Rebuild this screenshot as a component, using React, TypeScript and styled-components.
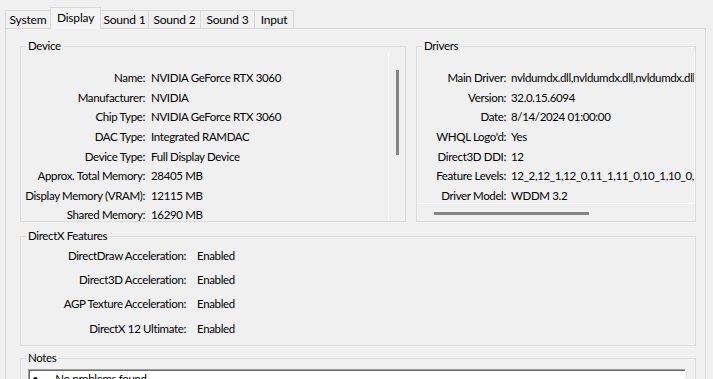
import styled, { createGlobalStyle } from "styled-components";

const GlobalStyle = createGlobalStyle`
  html, body {
    margin: 0;
    padding: 0;
    background: #f0f0f0;
  }
  body {
    font-family: Lato, "Liberation Sans", sans-serif;
    font-size: 11.5px;
    letter-spacing: -0.35px;
    color: #000;
    overflow: hidden;
  }
`;

const Window = styled.div`
  width: 713px;
  height: 379px;
  overflow: hidden;
  box-sizing: border-box;
  padding: 7px 0 0 5px;
`;

const TabBar = styled.div`
  display: flex;
  align-items: flex-end;
  height: 22px;
  margin-bottom: -1px;
  position: relative;
  z-index: 1;
`;

const Tab = styled.div<{ $active?: boolean; $w: number }>`
  width: ${(p) => p.$w}px;
  height: ${(p) => (p.$active ? 22 : 19)}px;
  box-sizing: border-box;
  margin-left: -1px;
  border: 1px solid #d9d9d9;
  border-bottom: ${(p) => (p.$active ? "none" : "1px solid #d9d9d9")};
  background: ${(p) => (p.$active ? "#f4f4f4" : "#f0f0f0")};
  display: flex;
  align-items: center;
  justify-content: center;
  font-size: 12px;
  letter-spacing: -0.2px;
  padding-bottom: ${(p) => (p.$active ? 3 : 1)}px;
  &:first-child {
    margin-left: 0;
  }
`;

const Panel = styled.div`
  width: 701px;
  height: 400px;
  box-sizing: border-box;
  border: 1px solid #d9d9d9;
  background: #f0f0f0;
  padding: 10px 9px 0 14px;
`;

const TopRow = styled.div`
  display: flex;
  gap: 10px;
`;

const Group = styled.fieldset<{ $w?: number; $h: number; $top?: number }>`
  margin: ${(p) => p.$top ?? 0}px 0 0 0;
  padding: 0;
  min-width: 0;
  width: ${(p) => (p.$w ? `${p.$w}px` : "auto")};
  height: ${(p) => p.$h}px;
  box-sizing: border-box;
  border: 1px solid #dcdcdc;
  display: flex;
  flex-direction: column;
`;

const Legend = styled.legend`
  margin-left: 5px;
  padding: 0 2px;
  line-height: 14px;
`;

const ScrollView = styled.div`
  flex: 1;
  display: flex;
  min-height: 0;
`;

const ScrollViewV = styled.div`
  flex: 1;
  display: flex;
  flex-direction: column;
  min-height: 0;
  min-width: 0;
`;

const List = styled.div<{ $right?: boolean; $bottom?: boolean }>`
  flex: 1;
  min-width: 0;
  min-height: 0;
  overflow: hidden;
  padding-top: 15px;
  border-right: ${(p) => (p.$right ? "1px solid #fafafa" : "none")};
  border-bottom: ${(p) => (p.$bottom ? "1px solid #fafafa" : "none")};
`;

const Row = styled.div<{ $label: number; $gap: number; $h: number }>`
  display: grid;
  grid-template-columns: ${(p) => p.$label}px auto;
  column-gap: ${(p) => p.$gap}px;
  height: ${(p) => p.$h}px;
  align-items: center;
  white-space: nowrap;
`;

const Label = styled.span`
  justify-self: end;
`;

const Value = styled.span``;

const VTrack = styled.div`
  width: 16px;
  padding-top: 17px;
  box-sizing: border-box;
`;

const VThumb = styled.div`
  width: 3px;
  height: 85px;
  margin-left: 7px;
  background: #858585;
`;

const HTrack = styled.div`
  height: 17px;
  padding: 8px 0 0 17px;
  box-sizing: border-box;
`;

const HThumb = styled.div`
  width: 155px;
  height: 3px;
  background: #858585;
`;

const FeatureList = styled.div`
  padding-top: 0;
`;

const NotesBox = styled.div`
  margin: 4px 10px 0 7px;
  height: 40px;
  background: #fff;
  border-top: 1px solid #a0a0a0;
  border-left: 1px solid #a0a0a0;
  box-shadow: inset 1px 1px 0 #696969;
  display: flex;
  gap: 17px;
  padding: 2px 0 0 3px;
`;

const device: [string, string][] = [
  ["Name:", "NVIDIA GeForce RTX 3060"],
  ["Manufacturer:", "NVIDIA"],
  ["Chip Type:", "NVIDIA GeForce RTX 3060"],
  ["DAC Type:", "Integrated RAMDAC"],
  ["Device Type:", "Full Display Device"],
  ["Approx. Total Memory:", "28405 MB"],
  ["Display Memory (VRAM):", "12115 MB"],
  ["Shared Memory:", "16290 MB"],
];

const drivers: [string, string][] = [
  ["Main Driver:", "nvldumdx.dll,nvldumdx.dll,nvldumdx.dll,nvldumdx.dll"],
  ["Version:", "32.0.15.6094"],
  ["Date:", "8/14/2024 01:00:00"],
  ["WHQL Logo'd:", "Yes"],
  ["Direct3D DDI:", "12"],
  ["Feature Levels:", "12_2,12_1,12_0,11_1,11_0,10_1,10_0,9_3,9_2,9_1"],
  ["Driver Model:", "WDDM 3.2"],
];

const features: [string, string][] = [
  ["DirectDraw Acceleration:", "Enabled"],
  ["Direct3D Acceleration:", "Enabled"],
  ["AGP Texture Acceleration:", "Enabled"],
  ["DirectX 12 Ultimate:", "Enabled"],
];

const tabs: [string, number][] = [
  ["System", 46],
  ["Display", 51],
  ["Sound 1", 49],
  ["Sound 2", 53],
  ["Sound 3", 55],
  ["Input", 40],
];

export default function App() {
  return (
    <>
      <GlobalStyle />
      <Window>
        <TabBar>
          {tabs.map(([t, w]) => (
            <Tab key={t} $w={w} $active={t === "Display"}>
              {t}
            </Tab>
          ))}
        </TabBar>
        <Panel>
          <TopRow>
            <Group $w={386} $h={183}>
              <Legend>Device</Legend>
              <ScrollView>
                <List $right>
                  {device.map(([l, v]) => (
                    <Row key={l} $label={124} $gap={6} $h={19.6}>
                      <Label>{l}</Label>
                      <Value>{v}</Value>
                    </Row>
                  ))}
                </List>
                <VTrack>
                  <VThumb />
                </VTrack>
              </ScrollView>
            </Group>
            <Group $w={280} $h={183}>
              <Legend>Drivers</Legend>
              <ScrollViewV>
                <List $right $bottom>
                  {drivers.map(([l, v]) => (
                    <Row key={l} $label={89} $gap={5} $h={19.6}>
                      <Label>{l}</Label>
                      <Value>{v}</Value>
                    </Row>
                  ))}
                </List>
                <HTrack>
                  <HThumb />
                </HTrack>
              </ScrollViewV>
            </Group>
          </TopRow>
          <Group $h={117} $top={7}>
            <Legend>DirectX Features</Legend>
            <FeatureList>
              {features.map(([l, v]) => (
                <Row key={l} $label={165} $gap={11} $h={24.3}>
                  <Label>{l}</Label>
                  <Value>{v}</Value>
                </Row>
              ))}
            </FeatureList>
          </Group>
          <Group $h={80} $top={5}>
            <Legend>Notes</Legend>
            <NotesBox>
              <span>•</span>
              <span>No problems found.</span>
            </NotesBox>
          </Group>
        </Panel>
      </Window>
    </>
  );
}
